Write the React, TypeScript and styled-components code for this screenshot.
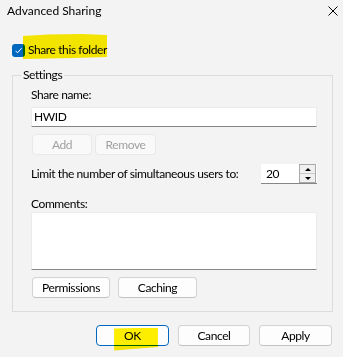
import React from 'react';
import styled, { createGlobalStyle } from 'styled-components';

const GlobalStyle = createGlobalStyle`
  html, body {
    margin: 0;
    padding: 0;
    background: #f3f3f3;
  }
  body {
    font-family: Lato, "Noto Sans", "Liberation Sans", sans-serif;
    font-size: 12px;
    line-height: 16px;
    letter-spacing: -0.4px;
    color: #000;
  }
`;

const Window = styled.div`
  width: 343px;
  height: 357px;
  display: flex;
  flex-direction: column;
  background: #f3f3f3;
  overflow: hidden;
`;

const TitleBar = styled.div`
  height: 22px;
  display: flex;
  align-items: center;
  justify-content: space-between;
  padding: 0 5px 0 7px;
`;

const Title = styled.div`
  color: #000;
  letter-spacing: 0;
`;

const CloseIcon = styled.svg`
  width: 10px;
  height: 10px;
  display: block;
`;

const CheckRow = styled.label`
  display: flex;
  align-items: center;
  gap: 3px;
  margin: 20px 0 0 12px;
`;

const CheckBox = styled.span`
  width: 13px;
  height: 13px;
  border-radius: 3px;
  background: #0067c0;
  display: flex;
  align-items: center;
  justify-content: center;
`;

const Marker = styled.span<{ $clip: string; $inset: string }>`
  position: relative;
  &::after {
    content: '';
    position: absolute;
    inset: ${(p) => p.$inset};
    background: #fff000;
    mix-blend-mode: multiply;
    clip-path: ${(p) => p.$clip};
    pointer-events: none;
  }
`;

const Group = styled.fieldset`
  margin: 9px 10px 0 12px;
  padding: 4px 15px 13px 18px;
  border: 1px solid #dcdcdc;
  display: flex;
  flex-direction: column;
  min-width: 0;
`;

const Legend = styled.legend`
  padding: 0 2px;
  margin-left: -10px;
`;

const FieldLabel = styled.div<{ $top?: number }>`
  margin-top: ${(p) => p.$top ?? 0}px;
`;

const TextBox = styled.div<{ $height: number; $top: number }>`
  height: ${(p) => p.$height}px;
  margin-top: ${(p) => p.$top}px;
  box-sizing: border-box;
  background: #fff;
  border: 1px solid #ebebeb;
  border-bottom-color: #868686;
  border-radius: 2px 2px 0 0;
  padding: 1px 2px;
  display: flex;
  align-items: flex-start;
`;

const ButtonRow = styled.div<{ $top: number; $gap: number }>`
  display: flex;
  gap: ${(p) => p.$gap}px;
  margin-top: ${(p) => p.$top}px;
  padding-left: 1px;
`;

const Button = styled.button<{ $width: number; $primary?: boolean }>`
  width: ${(p) => p.$width}px;
  height: 21px;
  box-sizing: border-box;
  padding: 0;
  font: inherit;
  letter-spacing: inherit;
  color: #000;
  background: #fdfdfd;
  border: 1px solid ${(p) => (p.$primary ? '#0067c0' : '#d3d3d3')};
  border-bottom-color: ${(p) => (p.$primary ? '#0067c0' : '#c2c2c2')};
  border-radius: 4px;
  display: flex;
  align-items: center;
  justify-content: center;

  &:disabled {
    color: #a0a0a0;
    background: #f9f9f9;
    border-color: #e9e9e9;
  }
`;

const LimitRow = styled.div`
  display: flex;
  align-items: center;
  justify-content: space-between;
  margin-top: 9px;
  white-space: nowrap;
`;

const SpinBox = styled.div`
  width: 56px;
  height: 20px;
  box-sizing: border-box;
  background: #fff;
  border-bottom: 1px solid #868686;
  display: flex;
  align-items: center;
  justify-content: space-between;
  padding: 0 1px 0 5px;
`;

const Spinner = styled.div`
  width: 17px;
  height: 19px;
  box-sizing: border-box;
  border: 1px solid #a9a9a9;
  background: #f0f0f0;
  display: flex;
  flex-direction: column;
`;

const SpinHalf = styled.div<{ $down?: boolean }>`
  flex: 1;
  display: flex;
  align-items: center;
  justify-content: center;
  border-top: ${(p) => (p.$down ? '1px solid #c8c8c8' : 'none')};
`;

const Arrow = styled.span<{ $down?: boolean }>`
  width: 0;
  height: 0;
  border-left: 3px solid transparent;
  border-right: 3px solid transparent;
  ${(p) => (p.$down ? 'border-top: 3px solid #000;' : 'border-bottom: 3px solid #000;')}
`;

const Footer = styled.div`
  display: flex;
  justify-content: flex-end;
  gap: 9px;
  margin-top: 13px;
  padding-right: 11px;
`;

export default function App() {
  return (
    <Window>
      <GlobalStyle />
      <TitleBar>
        <Title>Advanced Sharing</Title>
        <CloseIcon viewBox="0 0 10 10">
          <path d="M0.5 0.5 L9.5 9.5 M9.5 0.5 L0.5 9.5" stroke="#000" strokeWidth="1" fill="none" />
        </CloseIcon>
      </TitleBar>

      <CheckRow>
        <CheckBox>
          <svg width="9" height="9" viewBox="0 0 9 9">
            <path d="M1.5 4.8 L3.5 6.8 L7.6 2.2" stroke="#fff" strokeWidth="1" fill="none" />
          </svg>
        </CheckBox>
        <Marker
          $inset="-8px 0 -1px -5px"
          $clip="polygon(0 8%, 30% 2%, 70% 0, 100% 4%, 100% 92%, 60% 96%, 0 100%)"
        >
          Share this folder
        </Marker>
      </CheckRow>

      <Group>
        <Legend>Settings</Legend>
        <FieldLabel>Share name:</FieldLabel>
        <TextBox $height={20} $top={4}>HWID</TextBox>
        <ButtonRow $top={7} $gap={3}>
          <Button $width={60} disabled>Add</Button>
          <Button $width={61} disabled>Remove</Button>
        </ButtonRow>
        <LimitRow>
          <span>Limit the number of simultaneous users to:</span>
          <SpinBox>
            <span>20</span>
            <Spinner>
              <SpinHalf><Arrow /></SpinHalf>
              <SpinHalf $down><Arrow $down /></SpinHalf>
            </Spinner>
          </SpinBox>
        </LimitRow>
        <FieldLabel $top={12}>Comments:</FieldLabel>
        <TextBox $height={58} $top={0} />
        <ButtonRow $top={7} $gap={8}>
          <Button $width={78}>Permissions</Button>
          <Button $width={79}>Caching</Button>
        </ButtonRow>
      </Group>

      <Footer>
        <Button $width={73} $primary>
          <Marker
            $inset="0 -17px -7px -10px"
            $clip="polygon(0 4%, 100% 0, 100% 85%, 0 100%)"
          >
            OK
          </Marker>
        </Button>
        <Button $width={72}>Cancel</Button>
        <Button $width={73}>Apply</Button>
      </Footer>
    </Window>
  );
}
